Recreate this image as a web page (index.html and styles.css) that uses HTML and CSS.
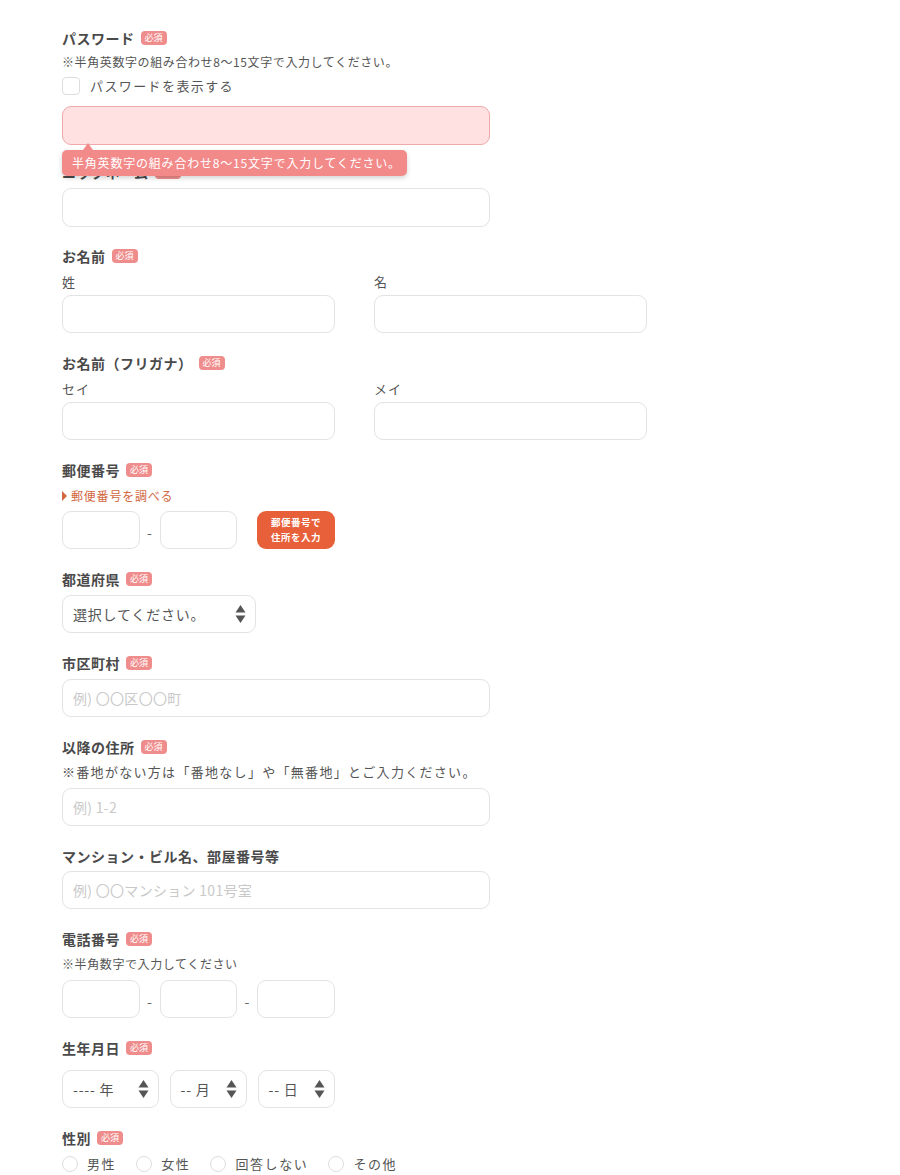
FILE: index.html
```html
<!DOCTYPE html>
<html lang="ja">
<head>
<meta charset="utf-8">
<title>会員登録フォーム</title>
<link rel="stylesheet" href="styles.css">
</head>
<body>
<form class="form">
  <div class="field field-pw">
    <div class="label">パスワード<span class="req">必須</span></div>
    <div class="note">※半角英数字の組み合わせ8〜15文字で入力してください。</div>
    <label class="check-row"><span class="checkbox"></span><span class="check-text">パスワードを表示する</span></label>
    <div class="pw-wrap">
      <input class="input input-error input-tall" type="password">
      <div class="tooltip">半角英数字の組み合わせ8〜15文字で入力してください。</div>
    </div>
  </div>

  <div class="field field-nick">
    <div class="label">ニックネーム<span class="req">必須</span></div>
    <input class="input input-tall" type="text">
  </div>

  <div class="field field-name">
    <div class="label">お名前<span class="req">必須</span></div>
    <div class="pair">
      <div class="col">
        <div class="sub">姓</div>
        <input class="input" type="text">
      </div>
      <div class="col">
        <div class="sub">名</div>
        <input class="input" type="text">
      </div>
    </div>
  </div>

  <div class="field">
    <div class="label">お名前（フリガナ）<span class="req">必須</span></div>
    <div class="pair">
      <div class="col">
        <div class="sub">セイ</div>
        <input class="input" type="text">
      </div>
      <div class="col">
        <div class="sub">メイ</div>
        <input class="input" type="text">
      </div>
    </div>
  </div>

  <div class="field">
    <div class="label">郵便番号<span class="req">必須</span></div>
    <a class="zip-link" href="#"><span class="tri"></span>郵便番号を調べる</a>
    <div class="row row-zip">
      <input class="input short" type="text">
      <span class="dash">-</span>
      <input class="input short" type="text">
      <button class="zip-btn" type="button">郵便番号で<br>住所を入力</button>
    </div>
  </div>

  <div class="field">
    <div class="label">都道府県<span class="req">必須</span></div>
    <div class="select select-pref">
      <span class="select-text">選択してください。</span>
      <svg class="arrows" width="11" height="20" viewBox="0 0 11 20"><path d="M5.5 1 L10.5 8.5 L0.5 8.5 Z" fill="#555"/><path d="M0.5 11.5 L10.5 11.5 L5.5 19 Z" fill="#555"/></svg>
    </div>
  </div>

  <div class="field">
    <div class="label">市区町村<span class="req">必須</span></div>
    <input class="input" type="text" placeholder="例) 〇〇区〇〇町">
  </div>

  <div class="field">
    <div class="label">以降の住所<span class="req">必須</span></div>
    <div class="note note-lg">※番地がない方は「番地なし」や「無番地」とご入力ください。</div>
    <input class="input input-after-note" type="text" placeholder="例) 1-2">
  </div>

  <div class="field">
    <div class="label">マンション・ビル名、部屋番号等</div>
    <input class="input input-tight" type="text" placeholder="例) 〇〇マンション 101号室">
  </div>

  <div class="field">
    <div class="label">電話番号<span class="req">必須</span></div>
    <div class="note note-tel">※半角数字で入力してください</div>
    <div class="row row-tel">
      <input class="input short" type="text">
      <span class="dash">-</span>
      <input class="input short" type="text">
      <span class="dash">-</span>
      <input class="input short" type="text">
    </div>
  </div>

  <div class="field">
    <div class="label">生年月日<span class="req">必須</span></div>
    <div class="row row-birth">
      <div class="select select-year">
        <span class="select-text">---- 年</span>
        <svg class="arrows" width="11" height="20" viewBox="0 0 11 20"><path d="M5.5 1 L10.5 8.5 L0.5 8.5 Z" fill="#555"/><path d="M0.5 11.5 L10.5 11.5 L5.5 19 Z" fill="#555"/></svg>
      </div>
      <div class="select select-md">
        <span class="select-text">-- 月</span>
        <svg class="arrows" width="11" height="20" viewBox="0 0 11 20"><path d="M5.5 1 L10.5 8.5 L0.5 8.5 Z" fill="#555"/><path d="M0.5 11.5 L10.5 11.5 L5.5 19 Z" fill="#555"/></svg>
      </div>
      <div class="select select-md">
        <span class="select-text">-- 日</span>
        <svg class="arrows" width="11" height="20" viewBox="0 0 11 20"><path d="M5.5 1 L10.5 8.5 L0.5 8.5 Z" fill="#555"/><path d="M0.5 11.5 L10.5 11.5 L5.5 19 Z" fill="#555"/></svg>
      </div>
    </div>
  </div>

  <div class="field">
    <div class="label">性別<span class="req">必須</span></div>
    <div class="radios">
      <label class="radio"><span class="circle"></span><span class="radio-text">男性</span></label>
      <label class="radio"><span class="circle"></span><span class="radio-text">女性</span></label>
      <label class="radio"><span class="circle"></span><span class="radio-text">回答しない</span></label>
      <label class="radio"><span class="circle"></span><span class="radio-text">その他</span></label>
    </div>
  </div>
</form>
</body>
</html>
```

FILE: styles.css
```css
* {
  box-sizing: border-box;
}

html, body {
  margin: 0;
  padding: 0;
  background: #ffffff;
}

body {
  font-family: "Noto Sans CJK JP", "Noto Sans", sans-serif;
  color: #555555;
}

.form {
  padding: 28px 0 0 62px;
  width: 900px;
}

.field {
  margin-top: 20px;
  display: flex;
  flex-direction: column;
  align-items: flex-start;
}

.field-pw {
  margin-top: 0;
}

.field-nick {
  margin-top: 17px;
}

.field-name {
  margin-top: 19px;
}

.label {
  font-size: 14px;
  line-height: 20px;
  font-weight: 700;
  color: #4a4a4a;
  letter-spacing: 0.5px;
  display: flex;
  align-items: center;
  margin-bottom: 6px;
}

.req {
  display: inline-flex;
  align-items: center;
  justify-content: center;
  width: 26px;
  height: 14px;
  margin-left: 6px;
  border-radius: 4px;
  background: #ef8c8c;
  color: #ffffff;
  font-size: 9px;
  font-weight: 400;
  letter-spacing: 0;
  line-height: 14px;
}

.note {
  font-size: 12px;
  line-height: 18px;
  letter-spacing: 0.6px;
  color: #555555;
  margin-top: -1px;
}

.note-lg {
  font-size: 13px;
  letter-spacing: 1.3px;
  margin-top: 0;
}

.note-tel {
  margin-top: 0;
}

.check-row {
  display: flex;
  align-items: center;
  height: 18px;
  margin-top: 6px;
}

.checkbox {
  width: 18px;
  height: 18px;
  border: 1px solid #dddddd;
  border-radius: 4px;
  background: #ffffff;
}

.check-text {
  margin-left: 10px;
  font-size: 13px;
  letter-spacing: 1.4px;
  line-height: 18px;
  color: #555555;
}

.pw-wrap {
  position: relative;
  margin-top: 11px;
}

.input {
  display: block;
  width: 428px;
  height: 38px;
  border: 1px solid #e3e3e3;
  border-radius: 9px;
  background: #ffffff;
  padding: 0 10px;
  font-family: inherit;
  font-size: 14px;
  color: #555555;
  outline: none;
}

.input::placeholder {
  color: #c9c9c9;
  letter-spacing: 0.3px;
}

.input-tall {
  height: 39px;
}

.input-error {
  background: #ffe1e1;
  border-color: #efaaaa;
}

.input-after-note {
  margin-top: 7px;
}

.input-tight {
  margin-top: -1px;
}

.tooltip {
  position: absolute;
  left: 0;
  top: 44px;
  width: 345px;
  height: 26px;
  padding: 0 10px;
  border-radius: 5px;
  background: #f38a8a;
  color: #ffffff;
  font-size: 12px;
  line-height: 26px;
  letter-spacing: 0.8px;
  box-shadow: 0 2px 5px rgba(0, 0, 0, 0.18);
  z-index: 2;
  white-space: nowrap;
}

.tooltip::before {
  content: "";
  position: absolute;
  left: 21px;
  top: -7px;
  border-left: 5px solid transparent;
  border-right: 5px solid transparent;
  border-bottom: 7px solid #f38a8a;
}

.pair {
  display: grid;
  grid-template-columns: 273px 273px;
  column-gap: 39px;
}

.col {
  display: flex;
  flex-direction: column;
}

.sub {
  font-size: 13px;
  line-height: 18px;
  letter-spacing: 1px;
  color: #555555;
  margin-top: 1px;
  margin-bottom: 4px;
}

.pair .input {
  width: 273px;
}

.zip-link {
  display: flex;
  align-items: center;
  font-size: 12px;
  line-height: 18px;
  letter-spacing: 0.8px;
  color: #d2673f;
  text-decoration: none;
  margin-top: 1px;
}

.tri {
  width: 0;
  height: 0;
  border-top: 5px solid transparent;
  border-bottom: 5px solid transparent;
  border-left: 5px solid #d2673f;
  margin-right: 4px;
}

.row {
  display: flex;
  align-items: center;
}

.row-zip {
  margin-top: 6px;
}

.row-tel {
  margin-top: 7px;
}

.input.short {
  width: 77.5px;
}

.dash {
  width: 20px;
  text-align: center;
  font-size: 14px;
  color: #666666;
  padding-top: 4px;
}

.zip-btn {
  margin-left: 20px;
  width: 78px;
  height: 38px;
  border: none;
  border-radius: 9px;
  background: #e8603a;
  color: #ffffff;
  font-family: inherit;
  font-size: 9.5px;
  font-weight: 700;
  line-height: 15px;
  letter-spacing: 0.5px;
  padding: 0;
}

.select {
  position: relative;
  display: flex;
  align-items: center;
  height: 38px;
  border: 1px solid #e3e3e3;
  border-radius: 9px;
  background: #ffffff;
  padding: 0 9px 0 10px;
}

.select-pref {
  width: 194px;
}

.select-year {
  width: 97px;
}

.select-md {
  width: 77.5px;
}

.row-birth {
  margin-top: 6px;
  gap: 10.5px;
}

.select-text {
  flex: 1;
  font-size: 14px;
  letter-spacing: 0.8px;
  color: #555555;
  white-space: nowrap;
}

.arrows {
  flex: none;
  display: block;
}

.radios {
  display: flex;
  align-items: center;
  margin-top: 1px;
  height: 18px;
}

.radio {
  display: flex;
  align-items: center;
  margin-right: 20px;
}

.circle {
  width: 16px;
  height: 16px;
  border: 1px solid #dddddd;
  border-radius: 50%;
  background: #ffffff;
}

.radio-text {
  margin-left: 9px;
  font-size: 13px;
  letter-spacing: 1.6px;
  line-height: 18px;
  color: #555555;
}
```
